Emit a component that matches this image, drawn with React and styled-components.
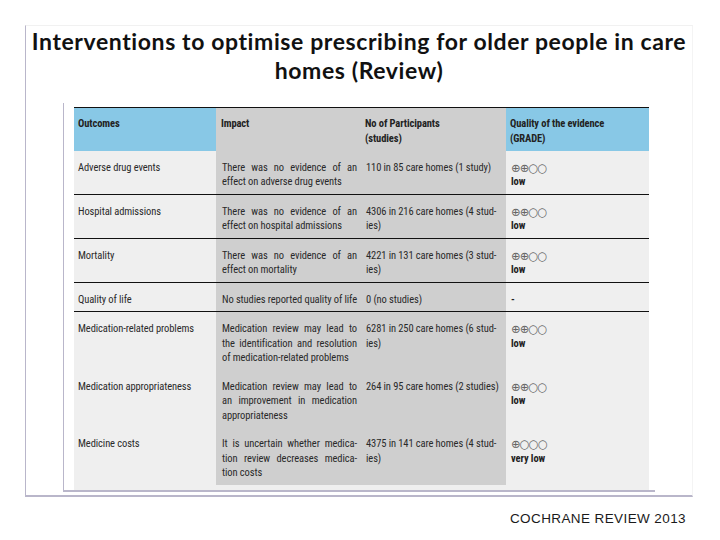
import styled, { createGlobalStyle } from 'styled-components';

const GlobalStyle = createGlobalStyle`
  html, body {
    margin: 0;
    padding: 0;
    background: #ffffff;
  }
  * {
    box-sizing: border-box;
  }
`;

const Page = styled.div`
  width: 720px;
  height: 540px;
  padding: 25px 0 0 25px;
  overflow: hidden;
  display: flex;
  flex-direction: column;
`;

const Frame = styled.div`
  width: 668px;
  height: 472px;
  border-left: 1px solid #b9b6ca;
  border-bottom: 2px solid #b9b6ca;
  border-top: 1px solid #f1f1f1;
  border-right: 1px solid #f4f4f4;
  display: flex;
  flex-direction: column;
`;

const Title = styled.h1`
  margin: 0;
  padding: 1px 0 0 0;
  font-family: Lato, "Open Sans", sans-serif;
  font-weight: 700;
  font-size: 23px;
  letter-spacing: 0.6px;
  line-height: 29px;
  color: #111111;
  text-align: center;
`;

const Sheet = styled.div`
  margin: 18px 0 0 37px;
  width: 592px;
  height: 389px;
  padding: 4px 6px 0 10px;
  border-left: 1px solid #b9b6ca;
  border-bottom: 2px solid #b9b6ca;
`;

const Table = styled.table`
  width: 575px;
  border-collapse: collapse;
  table-layout: fixed;
  font-family: Roboto, "Liberation Sans", sans-serif;
  font-stretch: 75%;
  font-size: 10.5px;
  letter-spacing: -0.1px;
  line-height: 14.5px;
  color: #2a2a2a;
  border-top: 1px solid #111111;
`;

const colBg = {
  light: '#efefef',
  dark: '#cfcfcf',
};

const Head = styled.th`
  background: ${({ $tone }) => ($tone === 'blue' ? '#88c8e6' : colBg.dark)};
  height: 43px;
  padding: 9px 4px 0 ${({ $padLeft }) => $padLeft ?? 4}px;
  text-align: left;
  vertical-align: top;
  font-weight: 700;
  color: #222222;
`;

const Row = styled.tr`
  border-bottom: ${({ $ruled }) => ($ruled ? '1.5px solid #111111' : 'none')};
`;

const Cell = styled.td`
  background: ${({ $tone }) => colBg[$tone]};
  padding: 10px 4px 4px ${({ $padLeft }) => $padLeft ?? 5}px;
  vertical-align: top;
  text-align: ${({ $justify }) => ($justify ? 'justify' : 'left')};
  hyphens: manual;
`;

const Spacer = styled.td`
  height: 5px;
  padding: 0;
  background: ${colBg.light};
`;

const Grade = styled.div`
  font-family: "DejaVu Sans", sans-serif;
  font-stretch: normal;
  font-size: 11.5px;
  letter-spacing: -0.9px;
  color: #666666;
  line-height: 14.5px;
`;

const GradeLabel = styled.div`
  font-weight: 700;
  color: #222222;
`;

const Footer = styled.div`
  width: 661px;
  margin-top: 14px;
  text-align: right;
  font-family: "Liberation Sans", Arial, sans-serif;
  font-size: 13.5px;
  color: #1a1a1a;
  letter-spacing: 0.4px;
`;

const rows = [
  {
    outcome: 'Adverse drug events',
    impact: 'There was no evidence of an effect on adverse drug events',
    participants: '110 in 85 care homes (1 study)',
    grade: '⊕⊕○○',
    label: 'low',
    ruled: true,
  },
  {
    outcome: 'Hospital admissions',
    impact: 'There was no evidence of an effect on hospital admissions',
    participants: '4306 in 216 care homes (4 stud\u00adies)',
    grade: '⊕⊕○○',
    label: 'low',
    ruled: true,
  },
  {
    outcome: 'Mortality',
    impact: 'There was no evidence of an effect on mortality',
    participants: '4221 in 131 care homes (3 stud\u00adies)',
    grade: '⊕⊕○○',
    label: 'low',
    ruled: true,
  },
  {
    outcome: 'Quality of life',
    impact: 'No studies reported quality of life',
    participants: '0 (no studies)',
    grade: null,
    label: '-',
    ruled: true,
  },
  {
    outcome: 'Medication-related problems',
    impact: 'Medication review may lead to the identification and resolution of medication-related problems',
    participants: '6281 in 250 care homes (6 stud\u00adies)',
    grade: '⊕⊕○○',
    label: 'low',
  },
  {
    outcome: 'Medication appropriateness',
    impact: 'Medication review may lead to an\u00a0improvement in medication appropriateness',
    participants: '264 in 95 care homes (2 studies)',
    grade: '⊕⊕○○',
    label: 'low',
  },
  {
    outcome: 'Medicine costs',
    impact: 'It is uncertain whether medica\u00adtion review decreases medica\u00adtion costs',
    participants: '4375 in 141 care homes (4 stud\u00adies)',
    grade: '⊕○○○',
    label: 'very low',
  },
];

const App = () => {
  return (
    <>
      <GlobalStyle />
      <Page>
        <Frame>
          <Title>
            Interventions to optimise prescribing for older people in care
            <br />
            homes (Review)
          </Title>
          <Sheet>
            <Table>
              <colgroup>
                <col style={{ width: '142px' }} />
                <col style={{ width: '145px' }} />
                <col style={{ width: '145px' }} />
                <col style={{ width: '143px' }} />
              </colgroup>
              <thead>
                <tr>
                  <Head $tone="blue">Outcomes</Head>
                  <Head $padLeft={5}>Impact</Head>
                  <Head>
                    No of Participants
                    <br />
                    (studies)
                  </Head>
                  <Head $tone="blue">
                    Quality of the evidence
                    <br />
                    (GRADE)
                  </Head>
                </tr>
              </thead>
              <tbody>
                {rows.map((r) => (
                  <Row key={r.outcome} $ruled={r.ruled}>
                    <Cell $tone="light" $padLeft={4}>{r.outcome}</Cell>
                    <Cell $tone="dark" $justify $padLeft={6}>{r.impact}</Cell>
                    <Cell $tone="dark">{r.participants}</Cell>
                    <Cell $tone="light">
                      {r.grade && <Grade>{r.grade}</Grade>}
                      <GradeLabel>{r.label}</GradeLabel>
                    </Cell>
                  </Row>
                ))}
              </tbody>
              <tfoot>
                <tr>
                  <Spacer colSpan={4} />
                </tr>
              </tfoot>
            </Table>
          </Sheet>
        </Frame>
        <Footer>COCHRANE REVIEW 2013</Footer>
      </Page>
    </>
  );
};

export default App;
